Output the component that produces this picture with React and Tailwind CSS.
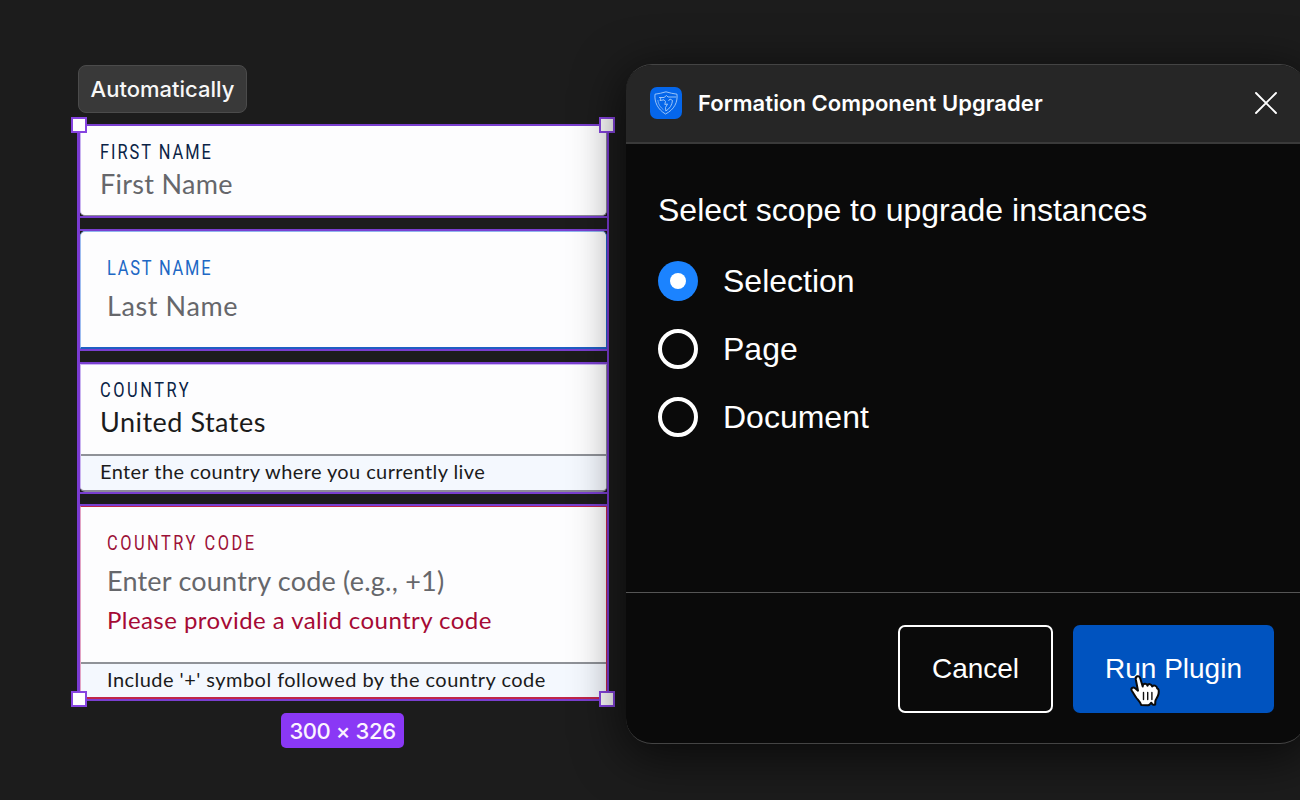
function Label({ className, children }) {
  return (
    <div className={`h-6 origin-left scale-x-[0.82] whitespace-nowrap font-['Roboto',sans-serif] text-[20px] leading-6 ${className}`}>
      {children}
    </div>
  );
}

function Value({ className, children }) {
  return (
    <div className={`h-9 whitespace-nowrap text-[27px] leading-9 ${className}`}>
      {children}
    </div>
  );
}

function Helper({ className, children }) {
  return (
    <div className={`whitespace-nowrap border-t-2 border-[#8f9298] bg-[#f4f8fe] text-[20px] leading-[30px] text-[#1b1b1b] ${className}`}>
      {children}
    </div>
  );
}

function Instance({ className, children }) {
  return <div className={`flex flex-col border-y-2 border-[#7a3fd0] ${className}`}>{children}</div>;
}

function Handle({ className }) {
  return <span className={`absolute size-4 border-2 border-[#8644e0] bg-white ${className}`} />;
}

function Fields() {
  return (
    <div className="relative flex w-[532px] flex-col gap-[11px] border-l-3 border-r-2 border-[#7a3bd2] font-['Lato',sans-serif]">
      <Instance className="h-[94px]">
        <div className="flex-1 rounded-b-[5px] border border-t-0 border-[#8d8a99] border-l-[#c9b3f0] bg-[#fdfdfe] pl-[19px] pt-[14px]">
          <Label className="tracking-[2.4px] text-[#0b2346]">FIRST NAME</Label>
          <Value className="mt-[2px] tracking-[0.3px] text-[#66676b]">First Name</Value>
        </div>
      </Instance>
      <Instance className="h-[122px]">
        <div className="flex-1 rounded-t-[5px] border border-b-2 border-[#1f5fc4] border-l-[#9dbcf0] border-t-[#8fb4ee] bg-[#fdfdfe] pl-[26px] pt-6">
          <Label className="tracking-[2.2px] text-[#2067c4]">LAST NAME</Label>
          <Value className="mt-2 tracking-[0.6px] text-[#66676b]">Last Name</Value>
        </div>
      </Instance>
      <Instance className="h-[132px]">
        <div className="flex flex-1 flex-col overflow-hidden rounded-b-[5px] border border-b-2 border-[#8d8a99] border-l-[#c9b3f0] border-t-[#cbb5f3] bg-[#fdfdfe]">
          <div className="flex-1 pl-[19px] pt-[13px]">
            <Label className="tracking-[3.1px] text-[#0b2346]">COUNTRY</Label>
            <Value className="mt-[2px] tracking-[0.5px] text-[#1b1b1b]">United States</Value>
          </div>
          <Helper className="h-[36px] pl-[19px] tracking-[0.4px]">Enter the country where you currently live</Helper>
        </div>
      </Instance>
      <Instance className="-mt-px h-[197px]">
        <div className="flex flex-1 flex-col border border-b-2 border-[#c0264a] border-l-[#e2a3c4] bg-[#fdfdfe]">
          <div className="flex-1 pl-[26px] pt-6">
            <Label className="tracking-[3.05px] text-[#9c1137]">COUNTRY CODE</Label>
            <Value className="mt-2 tracking-[0.22px] text-[#66676b]">Enter country code (e.g., +1)</Value>
            <div className="mt-[5px] h-8 whitespace-nowrap text-[24px] leading-8 tracking-[0.44px] text-[#a50a35]">
              Please provide a valid country code
            </div>
          </div>
          <Helper className="h-[35px] pl-[26px] tracking-[0.46px]">
            Include '+' symbol followed by the country code
          </Helper>
        </div>
      </Instance>
      <Handle className="-left-[9px] -top-[7px]" />
      <Handle className="-right-[8px] -top-[7px]" />
      <Handle className="-bottom-[6px] -left-[9px]" />
      <Handle className="-bottom-[6px] -right-[8px]" />
    </div>
  );
}

function Radio({ label, checked }) {
  return (
    <label className="flex h-10 items-center gap-[25px]">
      {checked ? (
        <span className="flex size-10 items-center justify-center rounded-full bg-[#1b83ff]">
          <span className="size-4 rounded-full bg-white" />
        </span>
      ) : (
        <span className="size-10 rounded-full border-4 border-white" />
      )}
      <span className="text-[32px] leading-10">{label}</span>
    </label>
  );
}

function PluginLogo() {
  return (
    <span className="flex size-8 items-center justify-center rounded-[7px] bg-[#0566ea]">
      <svg viewBox="0 0 32 32" className="size-8" fill="none" stroke="#a9cdf8" strokeWidth="0.9" strokeLinejoin="round">
        <path d="M5 7.200C8.500 6.700 12.500 6 16 4.800C19.500 6 23.500 6.700 27 7.200C27.800 15 24.500 22.500 15.500 27C7.800 22.500 4.200 15 5 7.200Z" />
        <path d="M9 10.500H14L16.500 8.500L18 10H26.300M11 10.500L10 13.500L14 12.800L15.500 14.500L14.800 17.500L17.500 17L15.500 20.500L15.800 24C20 21.500 22 18 22.500 13.500L20 12L18.500 14" />
        <path d="M7.800 13C8.200 17.500 10.500 20.500 13.500 22.800" strokeOpacity="0.7" />
      </svg>
    </span>
  );
}

function PointerCursor() {
  return (
    <svg viewBox="0 0 32 36" className="absolute left-[56px] top-[47px] h-9 w-8" strokeLinejoin="round" strokeLinecap="round">
      <path
        d="M12.200 33C11.700 30.500 9.500 28.500 7.500 26C6 24 4 20.500 2.700 18.500C1.500 16.300 4 14.500 6.200 16.200L9 18.700L6.800 7.500C6.300 4 10.200 3 11.200 6.200L13.700 14.500C13.500 11.300 17.700 10.800 18.500 13.800C19.200 11.300 22.600 11.600 23.200 14.600C24.300 12.400 28 13.500 28.200 16.500C29.700 16.800 30 18.500 29.600 21.500C29.200 25 26.500 27 26.300 29.300L26.200 32.500C24.500 33.200 23 32.700 22.300 30.700C21 32.500 20.500 33.300 19 33.300Z"
        fill="#fff"
        stroke="#0a0a0a"
        strokeWidth="2"
      />
      <path d="M14.500 20.500V27.500M18.700 20.500V27.500M22.900 20.500V27.500" fill="none" stroke="#111" strokeWidth="1.400" />
    </svg>
  );
}

function Dialog() {
  return (
    <div className="relative flex h-[680px] w-[680px] shrink-0 flex-col overflow-hidden rounded-[26px] border border-x-0 border-[#444] bg-[#0a0a0a] font-['Liberation_Sans',sans-serif] text-white shadow-[0_10px_48px_4px_rgba(0,0,0,0.62)]">
      <header className="flex h-[79px] shrink-0 items-center border-b-2 border-[#3a3a3a] bg-[#262626] pb-px pl-6 pr-[28px]">
        <PluginLogo />
        <h1 className="ml-4 flex-1 whitespace-nowrap font-['Inter',sans-serif] text-[22px] font-semibold tracking-[0.06px]">
          Formation Component Upgrader
        </h1>
        <svg viewBox="0 0 24 24" className="size-6" fill="none" stroke="#fff" strokeWidth="1.900" strokeLinecap="round">
          <path d="M2 2L22 22M22 2L2 22" />
        </svg>
      </header>
      <main className="flex flex-1 flex-col px-8 pt-[46px]">
        <h2 className="h-10 whitespace-nowrap text-[32px] leading-10">Select scope to upgrade instances</h2>
        <div className="mt-[31px] flex flex-col gap-7">
          <Radio label="Selection" checked />
          <Radio label="Page" />
          <Radio label="Document" />
        </div>
      </main>
      <footer className="flex h-[151px] shrink-0 justify-end gap-5 border-t border-[#555] pr-8 pt-8 text-[28px]">
        <button className="h-[88px] w-[155px] rounded-[7px] border-2 border-white">Cancel</button>
        <button className="relative h-[88px] w-[201px] rounded-[7px] bg-[#0053bf]">
          Run Plugin
          <PointerCursor />
        </button>
      </footer>
    </div>
  );
}

export default function App() {
  return (
    <div className="flex h-[800px] w-[1300px] items-start overflow-hidden bg-[#1c1c1c] pl-[77px] pt-16">
      <div className="flex w-[549px] shrink-0 flex-col items-start">
        <div className="ml-px mt-px flex h-12 w-[169px] items-center justify-center rounded-lg border border-[#4b4b4b] bg-[#393939] font-['Inter',sans-serif] text-[22px] font-medium text-[#f7f7f7]">
          Automatically
        </div>
        <div className="mt-[11px]">
          <Fields />
        </div>
        <div className="mt-3 flex w-[531px] justify-center">
          <div className="flex h-[35px] w-[123px] items-center justify-center whitespace-nowrap rounded-[5px] bg-[#8a38f5] pt-px font-['Inter',sans-serif] text-[22px] font-medium tracking-[-0.4px] text-[#fbf3ff]">
            300 × 326
          </div>
        </div>
      </div>
      <Dialog />
    </div>
  );
}
